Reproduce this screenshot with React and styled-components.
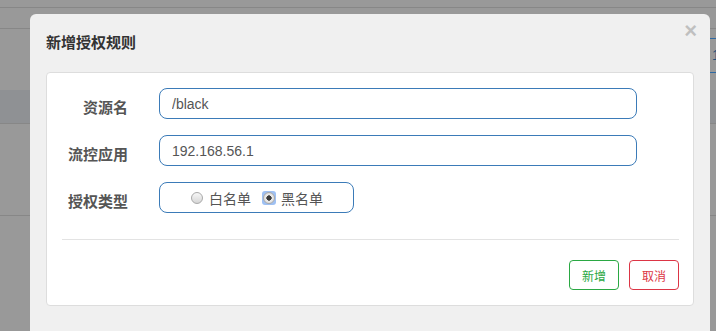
import React from "react";
import styled, { createGlobalStyle } from "styled-components";

const Global = createGlobalStyle`
  html, body {
    margin: 0;
    padding: 0;
    width: 716px;
    height: 331px;
    overflow: hidden;
    background: #999999;
    font-family: "Liberation Sans", "Noto Sans CJK SC", Arial, sans-serif;
  }
  * { box-sizing: border-box; }
`;

const Stage = styled.div`
  position: relative;
  width: 716px;
  height: 331px;
  overflow: hidden;
`;

/* dimmed page behind the dialog */
const Backdrop = styled.div`
  display: flex;
  flex-direction: column;
  width: 100%;
  height: 100%;
  background: #999999;
`;

const Strip = styled.div`
  display: flex;
  justify-content: flex-end;
  align-items: flex-start;
  height: ${(p) => p.$h}px;
  flex: ${(p) => (p.$grow ? "1" : "none")};
  background: ${(p) => p.$bg || "transparent"};
  border-bottom: ${(p) => (p.$line ? "1px solid #878787" : "none")};
`;

const Pager = styled.div`
  width: 6px;
  height: 35px;
  margin-top: 9px;
  padding-left: 2px;
  overflow: hidden;
  border-top: 1px solid #2f6aa3;
  border-bottom: 1px solid #2f6aa3;
  color: #23527c;
  font-size: 14px;
  line-height: 33px;
`;

const Modal = styled.div`
  position: absolute;
  left: 30px;
  top: 14px;
  width: 680px;
  height: 340px;
  background: #f0f0f0;
  border-radius: 6px;
  display: flex;
  flex-direction: column;
`;

const Header = styled.div`
  display: flex;
  align-items: center;
  height: 58px;
  padding: 0 13px 4px 16px;
`;

const Title = styled.h4`
  margin: 0;
  font-family: "Noto Sans CJK SC", sans-serif;
  font-size: 15px;
  font-weight: 700;
  color: #333333;
`;

const Close = styled.button`
  margin-left: auto;
  align-self: flex-start;
  margin-top: 6px;
  padding: 0;
  border: 0;
  background: transparent;
  font-family: "Liberation Sans", Arial, sans-serif;
  font-size: 22px;
  font-weight: 700;
  line-height: 1;
  color: #000;
  opacity: 0.2;
  cursor: pointer;
`;

const Body = styled.div`
  padding: 0 16px;
`;

const Card = styled.div`
  background: #ffffff;
  border: 1px solid #dddddd;
  border-radius: 4px;
  padding: 15px 14px 15px 15px;
`;

const Form = styled.div`
  display: flex;
  flex-direction: column;
  gap: 16px;
`;

const Row = styled.div`
  display: grid;
  grid-template-columns: 66px auto;
  column-gap: 31px;
  align-items: center;
  justify-content: start;
`;

const Label = styled.label`
  text-align: right;
  padding-top: 5px;
  font-family: "Noto Sans CJK SC", sans-serif;
  font-size: 15px;
  font-weight: 700;
  color: #555555;
  white-space: nowrap;
`;

const Input = styled.input`
  width: 478px;
  height: 31px;
  padding: 0 12px;
  border: 1px solid #3b7bb8;
  border-radius: 8px;
  outline: none;
  background: #fff;
  font-family: "Liberation Sans", Arial, sans-serif;
  font-size: 14px;
  color: #555555;
`;

const RadioBox = styled.div`
  width: 195px;
  height: 31px;
  border: 1px solid #3b7bb8;
  border-radius: 8px;
  display: flex;
  align-items: center;
  justify-content: center;
  gap: 11px;
  padding-top: 1px;
`;

const Option = styled.label`
  display: inline-flex;
  align-items: center;
  gap: 5px;
  font-family: "Noto Sans CJK SC", sans-serif;
  font-size: 14px;
  color: #555555;
`;

const RadioFrame = styled.span`
  display: inline-flex;
  align-items: center;
  justify-content: center;
  width: 14px;
  height: 14px;
  border-radius: 3px;
  background: ${(p) => (p.$focused ? "#9ec0f3" : "transparent")};
`;

const Radio = styled.input.attrs({ type: "radio" })`
  appearance: none;
  margin: 0;
  width: 12px;
  height: 12px;
  border-radius: 50%;
  border: 1px solid #a9a9a9;
  background: linear-gradient(#f7f7f7, #d6d6d6);
  &:checked {
    background: radial-gradient(circle, #3a3a3a 0 2.4px, #eaeaea 2.9px, #d6d6d6 100%);
  }
`;

const Divider = styled.hr`
  margin: 26px 0 20px;
  border: 0;
  border-top: 1px solid #e3e3e3;
`;

const Actions = styled.div`
  display: flex;
  justify-content: flex-end;
  gap: 10px;
`;

const Btn = styled.button`
  width: 50px;
  height: 30px;
  padding: 0;
  border: 1px solid ${(p) => p.$color};
  border-radius: 4px;
  background: #ffffff;
  color: ${(p) => p.$color};
  font-family: "Noto Sans CJK SC", sans-serif;
  font-size: 12px;
  cursor: pointer;
`;

export default function App() {
  return (
    <Stage>
      <Global />
      <Backdrop>
        <Strip $h={8} $line />
        <Strip $h={21} $line />
        <Strip $h={61}>
          <Pager>1</Pager>
        </Strip>
        <Strip $h={34} $bg="#8f9194" $line />
        <Strip $h={92} $line />
        <Strip $grow />
      </Backdrop>
      <Modal>
        <Header>
          <Title>新增授权规则</Title>
          <Close aria-label="close">×</Close>
        </Header>
        <Body>
          <Card>
            <Form>
              <Row>
                <Label>资源名</Label>
                <Input defaultValue="/black" />
              </Row>
              <Row>
                <Label>流控应用</Label>
                <Input defaultValue="192.168.56.1" />
              </Row>
              <Row>
                <Label>授权类型</Label>
                <RadioBox>
                  <Option>
                    <RadioFrame>
                      <Radio name="strategy" />
                    </RadioFrame>
                    白名单
                  </Option>
                  <Option>
                    <RadioFrame $focused>
                      <Radio name="strategy" defaultChecked />
                    </RadioFrame>
                    黑名单
                  </Option>
                </RadioBox>
              </Row>
            </Form>
            <Divider />
            <Actions>
              <Btn $color="#2aa843">新增</Btn>
              <Btn $color="#dc3545">取消</Btn>
            </Actions>
          </Card>
        </Body>
      </Modal>
    </Stage>
  );
}
